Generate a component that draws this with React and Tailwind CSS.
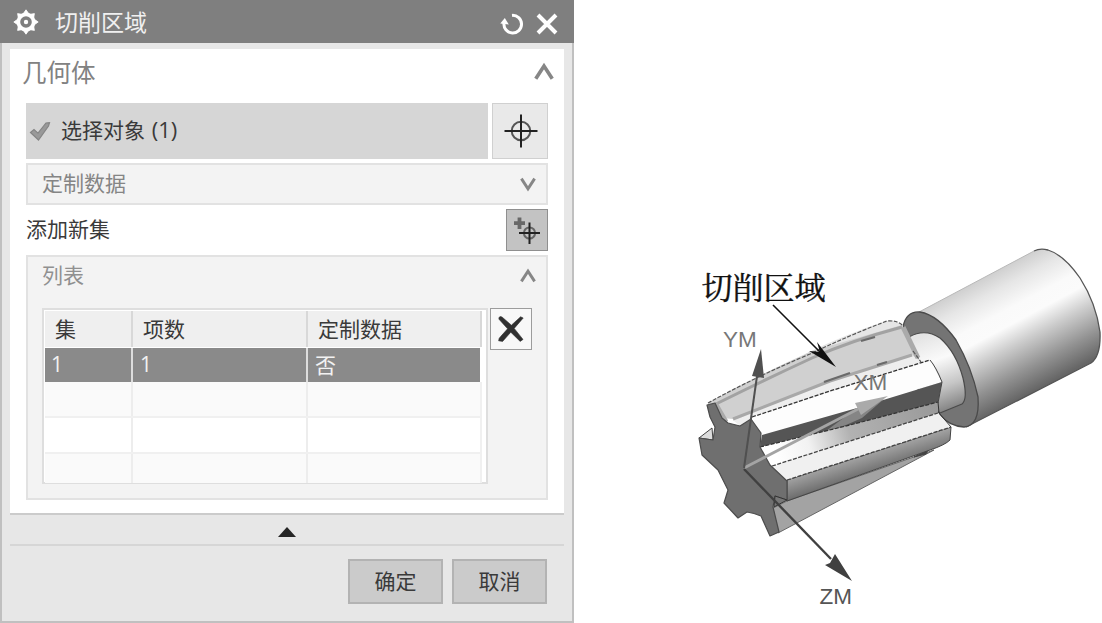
import { useState } from 'react';

const rows = [
  { id: 1, count: '1', custom: '否' },
];

const GearIcon = () => (
  <svg width="26" height="26" viewBox="0 0 26 26" fill="none" stroke="#fff">
    <circle cx="13" cy="13" r="7.6" strokeWidth="3.6" />
    <path
      d="M13 0.8 L16 5 H10 Z M13 25.2 L16 21 H10 Z M0.8 13 L5 10 V16 Z M25.2 13 L21 10 V16 Z M4.6 4.6 L9.4 5.4 L5.4 9.4 Z M21.4 4.6 L20.6 9.4 L16.6 5.4 Z M4.6 21.4 L5.4 16.6 L9.4 20.6 Z M21.4 21.4 L16.6 20.6 L20.6 16.6 Z"
      fill="#fff"
      strokeWidth="0.8"
    />
    <circle cx="13" cy="13" r="2.2" fill="#fff" stroke="none" />
  </svg>
);

const ResetIcon = () => (
  <svg width="24" height="24" viewBox="0 0 24 24" fill="none">
    <path d="M12 3.4 A8.8 8.8 0 1 1 4 11" stroke="#fff" strokeWidth="3" />
    <path d="M0.3 11.5 L4.8 6 L8.8 12.5 Z" fill="#fff" />
  </svg>
);

const CloseIcon = () => (
  <svg width="22" height="22" viewBox="0 0 22 22" fill="none">
    <path d="M2 2 L20 20 M20 2 L2 20" stroke="#fff" strokeWidth="4" />
  </svg>
);

const Chevron = ({ down, size = 16 }) => (
  <svg
    width={size}
    height={size}
    viewBox="0 0 16 16"
    fill="none"
    className={down ? 'rotate-180' : ''}
  >
    <path d="M1.4 13.4 L8 3.2 L14.6 13.4" stroke="#868686" strokeWidth="2.9" />
  </svg>
);

const CheckIcon = () => (
  <svg width="22" height="22" viewBox="0 0 22 22">
    <path d="M1.5 12.5 L5 9.5 L9 13.2 L17 3 L20.5 2.6 L19.5 6 L9.5 20 Z" fill="#999" stroke="#858585" strokeWidth="1.2" />
  </svg>
);

const TargetIcon = () => (
  <svg width="34" height="34" viewBox="0 0 34 34" fill="none">
    <circle cx="17" cy="17" r="9.3" stroke="#555" strokeWidth="2" />
    <path d="M17 0.5 V33.5 M0.5 17 H33.5" stroke="#222" strokeWidth="2" />
  </svg>
);

const AddSetIcon = () => (
  <svg width="40" height="40" viewBox="0 0 40 40" fill="none" className="shrink-0">
    <path d="M12.5 7.5 V19 M7 13.2 H18" stroke="#686868" strokeWidth="3.8" />
    <circle cx="22.5" cy="23" r="5.6" stroke="#666" strokeWidth="2" />
    <path d="M22.5 12.5 V34 M12 23 H33" stroke="#222" strokeWidth="2" />
  </svg>
);

const DeleteIcon = () => (
  <svg width="26" height="26" viewBox="0 0 26 26">
    <path
      d="M0.8 3 Q1 -0.4 4 1 L13.4 9.2 L22.6 0.8 L25.2 2 L16.2 12.4 L25 23.4 L22.2 25.4 L12.8 16.2 L4.6 25.4 L0.6 24.8 Q0.8 22 2.6 20.6 L9.6 12.8 Z"
      fill="#303030"
      stroke="#303030"
      strokeWidth="0.6"
    />
  </svg>
);

// Dao phay với hệ trục tọa độ gia công
const CutterModel = () => (
  <svg
    width="528"
    height="623"
    viewBox="574 0 528 623"
    strokeLinejoin="round"
    fontFamily="'Liberation Sans', Arial, sans-serif"
    className="shrink-0"
  >
    <defs>
      <linearGradient id="shank" gradientUnits="userSpaceOnUse" x1="977" y1="281" x2="1035" y2="390">
        <stop offset="0" stopColor="#cfcfcf" />
        <stop offset="0.14" stopColor="#e6e6e6" />
        <stop offset="0.32" stopColor="#fafafa" />
        <stop offset="0.44" stopColor="#fbfbfb" />
        <stop offset="0.6" stopColor="#cdcdcd" />
        <stop offset="0.82" stopColor="#929292" />
        <stop offset="1" stopColor="#666" />
      </linearGradient>
      <linearGradient id="neck" gradientUnits="userSpaceOnUse" x1="925" y1="335" x2="952" y2="408">
        <stop offset="0" stopColor="#e4e4e4" />
        <stop offset="0.35" stopColor="#fafafa" />
        <stop offset="0.7" stopColor="#c6c6c6" />
        <stop offset="1" stopColor="#858585" />
      </linearGradient>
      <linearGradient id="flute" gradientUnits="userSpaceOnUse" x1="775" y1="452" x2="938" y2="402">
        <stop offset="0" stopColor="#fff" />
        <stop offset="0.2" stopColor="#f2f2f2" />
        <stop offset="0.45" stopColor="#b2b2b2" />
        <stop offset="1" stopColor="#999" />
      </linearGradient>
      <linearGradient id="side" gradientUnits="userSpaceOnUse" x1="860" y1="455" x2="867" y2="477">
        <stop offset="0" stopColor="#a6a6a6" />
        <stop offset="1" stopColor="#686868" />
      </linearGradient>
    </defs>

    {/* shank */}
    <path
      d="M919 312 L1034 251 Q1040 248 1048 250 Q1064 255 1080 278 Q1096 303 1100 332 Q1101 356 1091 363 L966 427 Z"
      fill="url(#shank)"
    />
    <path d="M919 312 L1034 251" stroke="#b8b8b8" fill="none" />
    <path d="M1034 251 Q1040 248 1048 250 Q1064 255 1080 278 Q1096 303 1100 332 Q1101 356 1091 363 L966 427" stroke="#555" strokeWidth="1.3" fill="none" />
    <path
      d="M903 327 Q906 311 920 312 Q938 315 956 340 Q972 368 978 397 Q980 426 964 427 Q949 426 940 415 Z"
      fill="#747474"
      stroke="#4a4a4a"
      strokeWidth="1.3"
    />
    <path
      d="M909 337 Q925 328 940 338 Q956 352 963 378 Q968 399 962 404 L940 413 L920 400 Z"
      fill="url(#neck)"
      stroke="#4a4a4a"
      strokeWidth="1.2"
    />

    {/* lower tooth */}
    <path d="M773 508 L787 501 L934 450 L778 533 Z" fill="#a3a3a3" stroke="#666" />
    <path d="M914 457 L928 450 L926 454 Z" fill="#444" stroke="#444" />

    {/* third tooth */}
    <path d="M787 480 L951 427 L950 440 Q945 445 930 450 L787 501 Z" fill="url(#side)" stroke="#444" />
    <path d="M760 447 L850 424 L938 401 L938 414 L772 466 Z" fill="url(#flute)" />
    <path d="M772 466 L938 413 L951 427 L787 480 Z" fill="#f0f0f0" />
    <path d="M772 466 L938 413 M787 480 L951 427" stroke="#444" strokeWidth="1.3" strokeDasharray="4 1.5" fill="none" />
    <path d="M938 402 L939 413 L951 427" stroke="#333" fill="none" />

    {/* second tooth */}
    <path d="M733 420 L830 381 L912 354 L921 362 L930 360 L752 418 L740 426 Z" fill="#eee" />
    <path d="M752 417 L930 360 L942 382 L762 435 Z" fill="#fdfdfd" />
    <path d="M762 435 L857 408 L942 382 L938 402 L850 425 L760 447 Z" fill="#555" />
    <path d="M857 408 L884 399 L862 418 L846 425 L826 431 Z" fill="#858585" />
    <path d="M752 417 L830 391 L930 360" stroke="#333" strokeWidth="1.3" strokeDasharray="4 1.5" fill="none" />
    <path d="M760 447 L850 425 L938 402" stroke="#333" strokeWidth="1.2" strokeDasharray="4 1.5" fill="none" />
    <path d="M930 360 Q936 367 942 382 L938 403" stroke="#444" fill="none" />

    {/* selected flute */}
    <path d="M805 354 Q848 333 887 321 Q899 320 905 329 L812 354 Z" fill="#e6e6e6" />
    <path d="M708 403 Q758 375 812 351 L902 325 L920 361 L912 355 L830 381 L733 419 L722 418 Z" fill="#d0d0d0" />
    <path d="M716 404 Q758 383 812 358 Q850 341 902 327" stroke="#a2a2a2" strokeWidth="3" fill="none" />
    <path d="M733 419 L830 381 L912 355" stroke="#a8a8a8" strokeWidth="3" fill="none" />
    <path d="M715 403 L726 422 M903 327 L918 358" stroke="#aaa" strokeWidth="5" fill="none" />
    <path d="M861 341 L875 337 M877 365 L887 362 M824 382 L850 373" stroke="#6a6a6a" strokeWidth="2.2" />
    <path d="M708 403 Q755 377 810 354 Q850 335 887 321 Q899 320 904 327 M913 351 L921 362" stroke="#555" strokeWidth="1.2" strokeDasharray="4 1.5" fill="none" />

    {/* front face */}
    <path d="M699 438 L712 428 L713 440 Z" fill="#ddd" stroke="#444" />
    <path
      d="M707 405 L715 403 L722 418 L728 423 L740 426 L751 419 L761 433 L760 447 L770 465 L787 481 L787 500 L775 496 L773 507 L779 532 L770 536 L761 516 Q754 513 747 512 L738 518 L724 503 L728 490 L718 470 L702 455 L699 438 L713 440 L715 427 L710 417 Z"
      fill="#6f6f6f"
      stroke="#4c4c4c"
      strokeWidth="1.2"
    />
    <path d="M774 507 L787 500 L775 496 Z" fill="#777" stroke="#333" />

    {/* axes */}
    <path d="M744 468 L858 409" stroke="#a4a4a4" strokeWidth="3" />
    <path d="M855 403 L888 396 L861 415 Z" fill="#aaa" />
    <path d="M744 468 L757 376" stroke="#505050" strokeWidth="2" />
    <path d="M761 349 L764 378 L752 376 Z" fill="#505050" />
    <path d="M744 469 L831 559" stroke="#404040" strokeWidth="2.4" />
    <path d="M852 581 L825 565 L830 563 L835 554 Z" fill="#404040" />
    <g fontSize="22.5" fill="#777">
      <text x="723" y="347">YM</text>
      <text x="853.5" y="390">XM</text>
      <text x="819.5" y="604" fill="#555">ZM</text>
    </g>

    {/* callout */}
    <path d="M773 305 L822 354" stroke="#111" strokeWidth="1.6" />
    <path d="M836 367 L809 351 L820 352 L817 342 Z" fill="#111" />
    <text
      x="701.5"
      y="298.5"
      fontSize="31"
      fill="#111"
      stroke="#111"
      strokeWidth="0.4"
      fontFamily="'Noto Serif CJK SC', 'Noto Sans CJK SC', serif"
    >
      切削区域
    </text>
  </svg>
);

const App = () => {
  const [openData, setOpenData] = useState(false);
  const [openList, setOpenList] = useState(true);

  return (
    <div className="flex h-[623px] w-[1102px] overflow-hidden bg-white font-['Noto_Sans_CJK_SC',sans-serif] text-[21px] text-[#3a3a3a]">
      <div className="flex h-[623px] w-[574px] shrink-0 flex-col border-b-2 border-[#c0c0c0] bg-[#e7e7e7]">
        <div className="flex h-[43px] shrink-0 items-center bg-[#7f7f7f] pr-4 pl-[13px]">
          <GearIcon />
          <div className="ml-4 flex-1 text-[23px] leading-[41px] text-[#f0f0f0]">切削区域</div>
          <div className="flex items-center gap-3 pt-1">
            <button><ResetIcon /></button>
            <button><CloseIcon /></button>
          </div>
        </div>

        <div className="flex flex-1 flex-col border-r-2 border-l-2 border-[#c0c0c0] px-2 pt-1.5">
          <div className="h-[466px] border-b-2 border-[#cbcbcb] bg-white px-4 pt-[3px]">
            <div className="-ml-1 flex h-[41px] items-center justify-between text-[24.5px] text-[#828282]">
              <span>几何体</span>
              <button className="-mr-1.5 pb-0.5"><Chevron size={20} /></button>
            </div>

            <div className="mt-[10px] flex h-14 gap-1">
              <div className="flex flex-1 items-center bg-[#d6d6d6] pl-[3px]">
                <CheckIcon />
                <span className="ml-[10px] pb-1">
                  选择对象 <span className="ml-0.5 font-['Open_Sans'] text-[22px]">(1)</span>
                </span>
              </div>
              <button className="flex w-14 items-center justify-center border border-[#d0d0d0] bg-[#e9e9e9] pl-0.5">
                <TargetIcon />
              </button>
            </div>

            <div
              className="mt-1 flex h-[42px] items-center justify-between border-2 border-[#e2e2e2] bg-[#f3f3f3] pr-2.5 pl-3.5 text-[#858585]"
              onClick={() => setOpenData(!openData)}
            >
              <span className="pb-0.5">定制数据</span>
              <Chevron down={!openData} />
            </div>

            <div className="mt-1 flex h-[42px] items-center justify-between">
              <span className="pb-0.5">添加新集</span>
              <button className="flex size-[42px] items-center justify-center border border-[#8f8f8f] bg-[#c3c3c3]">
                <AddSetIcon />
              </button>
            </div>

            <div className="mt-1 h-[245px] border-2 border-[#e2e2e2] bg-[#f3f3f3] pl-3.5">
              <div
                className="flex h-[37px] items-center justify-between pr-2.5 text-[#909090]"
                onClick={() => setOpenList(!openList)}
              >
                <span className="pb-0.5">列表</span>
                <Chevron down={!openList} />
              </div>
              {openList && (
                <div className="mt-3.5 flex gap-[3px]">
                  <div className="h-[176px] w-[446px] border-2 border-[#dedede] bg-white pt-[1px] pl-[1px]">
                    <div className="flex h-9 w-[437px] border-r-2 border-[#d8d8d8] bg-[#efefef] leading-[35px]">
                      <div className="w-[88px] border-r-2 border-[#d8d8d8] pl-2.5">集</div>
                      <div className="w-[175px] border-r-2 border-[#d8d8d8] pl-2.5">项数</div>
                      <div className="flex-1 pl-2.5">定制数据</div>
                    </div>
                    {rows.map((r) => (
                      <div key={r.id} className="mt-px flex h-[34px] w-[435px] bg-[#8a8a8a] leading-[33px] text-[#f2f2f2]">
                        <div className="w-[88px] border-r-2 border-[#ddd] pl-1.5 font-['Open_Sans']">{r.id}</div>
                        <div className="w-[175px] border-r-2 border-[#ddd] pl-[7px] font-['Open_Sans']">{r.count}</div>
                        <div className="flex-1 pl-[7px]">{r.custom}</div>
                      </div>
                    ))}
                    {[0, 1, 2].map((i) => (
                      <div
                        key={i}
                        className="flex h-9 w-[437px] border-r-2 border-b-2 border-[#f0f0f0] odd:bg-[#fafafa] even:bg-white last:h-[29px] last:border-b-0"
                      >
                        <div className="w-[88px] border-r-2 border-[#ededed]" />
                        <div className="w-[175px] border-r-2 border-[#ededed]" />
                      </div>
                    ))}
                  </div>
                  <button className="-ml-px flex size-[42px] items-center justify-center border border-[#9c9c9c] bg-[#f8f8f8]">
                    <DeleteIcon />
                  </button>
                </div>
              )}
            </div>
          </div>

          <div className="flex h-[31px] items-center justify-center border-b-2 border-[#d6d6d6] pt-1">
            <svg width="18" height="10" viewBox="0 0 18 10">
              <path d="M9 0 L18 10 H0 Z" fill="#262626" />
            </svg>
          </div>

          <div className="mt-[13px] flex justify-end gap-[9px] pr-[17px]">
            <button className="h-[45px] w-[95px] border-2 border-[#b3b3b3] bg-[#cbcbcb] pb-0.5">确定</button>
            <button className="h-[45px] w-[95px] border-2 border-[#b3b3b3] bg-[#cbcbcb] pb-0.5">取消</button>
          </div>
        </div>
      </div>

      <CutterModel />
    </div>
  );
};

export default App;
